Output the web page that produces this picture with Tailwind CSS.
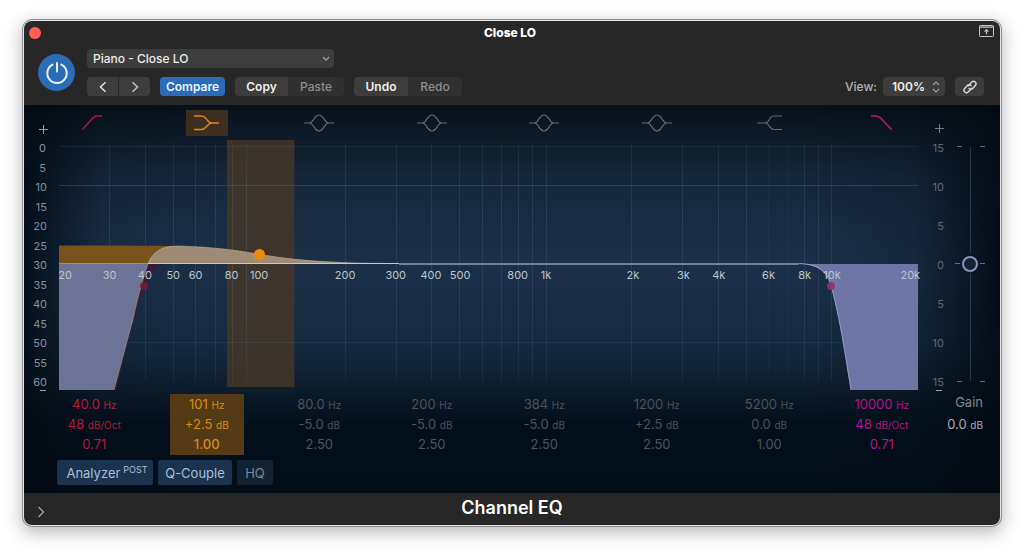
<!DOCTYPE html>
<html lang="en">
<head>
<meta charset="utf-8">
<meta name="viewport" content="width=device-width, initial-scale=1">
<title>Channel EQ</title>
<script src="https://cdn.jsdelivr.net/npm/@tailwindcss/browser@4"></script>
</head>
<body class="bg-white px-6 pt-[21px] pb-7 font-['Inter','Liberation_Sans',sans-serif]">
<div class="flex flex-col overflow-hidden rounded-lg bg-[#272727] shadow-[0_0_0_1px_#e6e4e6,0_0_0_2px_#8f8d8f,0_5px_18px_2px_rgba(0,0,0,0.3)]">

  <!-- Title bar and plug-in header -->
  <header class="pb-[9px]">
    <div class="flex h-7 items-start justify-between pr-[6px] pl-[5px]">
      <button aria-label="Close" class="mt-[6px] size-3 rounded-full bg-[#ff5f57]"></button>
      <h1 class="mt-1 text-xs leading-4 font-extrabold text-white">Close LO</h1>
      <button aria-label="Detach window" class="mt-1 text-[#c4c4c4]">
        <svg class="block" width="15" height="12" viewBox="0 0 15 12" fill="none" stroke="currentColor"><rect x=".5" y=".5" width="14" height="11" rx=".8"/><path d="M.5 2.1h14" stroke-width="1.6" opacity=".75"/><path d="M7.500 9.300V4.800M5.500 6.700l2-2 2 2" stroke-width="1.200"/></svg>
      </button>
    </div>
    <div class="flex items-center pr-4 pl-[14px]">
      <button aria-label="Power" class="grid size-[37px] place-items-center rounded-full bg-[#2a6cb8] text-[#e6eef8]">
        <svg width="24" height="24" viewBox="0 0 24 24" fill="none" stroke="currentColor" stroke-width="2" stroke-linecap="round"><path d="M12 2v8.500M7.600 3.600a9.700 9.700 0 1 0 8.800 0"/></svg>
      </button>
      <div class="ml-3 flex flex-1 flex-col gap-[9px]">
        <div class="relative w-[247px]">
          <select aria-label="Preset" class="block h-[19px] w-full appearance-none rounded bg-[#3d3d3d] pl-[6px] text-xs font-medium text-[#ededed]"><option>Piano - Close LO</option></select>
          <svg class="pointer-events-none absolute top-[7px] right-1" width="8" height="6" viewBox="0 0 8 6" fill="none" stroke="#a0a0a0" stroke-width="1.200"><path d="M1 1l3 3.200L7 1"/></svg>
        </div>
        <div class="flex h-[19px] items-stretch gap-[10px] text-xs leading-[19px] font-semibold">
          <div class="flex gap-px overflow-hidden rounded">
            <button aria-label="Previous preset" class="grid w-[31px] place-items-center bg-[#3d3d3d]"><svg width="8" height="12" viewBox="0 0 8 12" fill="none" stroke="#e2e2e2" stroke-width="1.500"><path d="M6.500 1.200L1.500 6l5 4.800"/></svg></button>
            <button aria-label="Next preset" class="grid w-[31px] place-items-center bg-[#3d3d3d]"><svg width="8" height="12" viewBox="0 0 8 12" fill="none" stroke="#c4c4c4" stroke-width="1.500"><path d="M1.500 1.200l5 4.800-5 4.800"/></svg></button>
          </div>
          <button class="w-[65px] rounded bg-[#2a6cb8] text-[#e8f1fb]">Compare</button>
          <div class="flex overflow-hidden rounded">
            <button class="w-[53px] bg-[#3d3d3d] text-[#ededed]">Copy</button>
            <button class="w-14 bg-[#303030] font-medium text-[#8e8e8e]">Paste</button>
          </div>
          <div class="flex overflow-hidden rounded">
            <button class="w-[54px] bg-[#3d3d3d] text-[#ededed]">Undo</button>
            <button class="w-[54px] bg-[#303030] font-medium text-[#8e8e8e]">Redo</button>
          </div>
          <div class="ml-auto flex">
            <label for="view" class="mr-[6px] font-medium text-[#b4b4b4]">View:</label>
            <div class="relative w-[62px]">
              <select id="view" class="block h-[19px] w-full appearance-none rounded bg-[#3d3d3d] pl-[9px] text-xs font-semibold text-[#ededed]"><option>100%</option></select>
              <svg class="pointer-events-none absolute top-1 right-[5px]" width="8" height="12" viewBox="0 0 8 12" fill="none" stroke="#9a9a9a" stroke-width="1.200"><path d="M1 4l3-3 3 3M1 8l3 3 3-3"/></svg>
            </div>
            <button aria-label="Link" class="ml-[10px] grid w-[29px] place-items-center rounded bg-[#3d3d3d]">
              <svg width="14" height="14" viewBox="0 0 14 14" fill="none" stroke="#d6d6d6" stroke-width="1.500" stroke-linecap="round"><path d="M5.300 5.800l3.300-3.600a2.500 2.500 0 0 1 3.700 3.400L9.700 8.400a2.500 2.500 0 0 1-3.600.1"/><path d="M8.700 8.200l-3.300 3.600a2.500 2.500 0 0 1-3.700-3.400L4.300 5.600a2.500 2.500 0 0 1 3.600-.1"/></svg>
            </button>
          </div>
        </div>
      </div>
    </div>
  </header>

  <main class="relative bg-[linear-gradient(90deg,rgba(2,10,18,0.85),rgba(2,10,18,0.1)_8%,transparent_20%,transparent_80%,rgba(2,10,18,0.2)_91%,rgba(2,10,18,0.9)),linear-gradient(180deg,#08111a,#0e1b28_9%,#15263a_18%,#1a2d44_32%,#1b3048_44%,#152a40_62%,#0d1c2b_73%,#03101c_82%,#020d17)]">
    <!-- Band selectors -->
    <nav aria-label="Bands" class="mr-[62px] ml-[14px] grid h-[34px] grid-cols-8 justify-items-center pt-[5px] text-[#5b6b7a]">
      <button aria-label="Low cut" class="grid h-[26px] w-[42px] place-items-center text-[#a81842]"><svg width="30" height="18" viewBox="0 0 30 18" fill="none" stroke="currentColor" stroke-width="1.300"><path d="M3.500 15.500L12 6Q15.500 2 18 2h5"/></svg></button>
      <button aria-label="Low shelf" class="grid h-[26px] w-[42px] place-items-center bg-[#3d2e20] text-[#d98a15]"><svg width="30" height="18" viewBox="0 0 30 18" fill="none" stroke="currentColor" stroke-width="1.300"><path d="M2 2h7Q12 2 14 4.500L16 7Q17.500 9 20 9h7M2 15.500h7q3 0 5-2.500l2-2Q17.500 9 20 9"/></svg></button>
      <button aria-label="Peak 1" class="grid h-[26px] w-[42px] place-items-center"><svg width="30" height="18" viewBox="0 0 30 18" fill="none" stroke="currentColor" stroke-width="1.200"><path d="M0 9h5q2 0 3.200-1.600L11.500 3q3.500-4 7 0l3.300 4.400Q23 9 25 9h5M5 9q2 0 3.200 1.600l3.300 4.400q3.500 4 7 0l3.300-4.400Q23 9 25 9"/></svg></button>
      <button aria-label="Peak 2" class="grid h-[26px] w-[42px] place-items-center"><svg width="30" height="18" viewBox="0 0 30 18" fill="none" stroke="currentColor" stroke-width="1.200"><path d="M0 9h5q2 0 3.200-1.600L11.500 3q3.500-4 7 0l3.300 4.400Q23 9 25 9h5M5 9q2 0 3.200 1.600l3.300 4.400q3.500 4 7 0l3.300-4.400Q23 9 25 9"/></svg></button>
      <button aria-label="Peak 3" class="grid h-[26px] w-[42px] place-items-center"><svg width="30" height="18" viewBox="0 0 30 18" fill="none" stroke="currentColor" stroke-width="1.200"><path d="M0 9h5q2 0 3.200-1.600L11.500 3q3.500-4 7 0l3.300 4.400Q23 9 25 9h5M5 9q2 0 3.200 1.600l3.300 4.400q3.500 4 7 0l3.300-4.400Q23 9 25 9"/></svg></button>
      <button aria-label="Peak 4" class="grid h-[26px] w-[42px] place-items-center"><svg width="30" height="18" viewBox="0 0 30 18" fill="none" stroke="currentColor" stroke-width="1.200"><path d="M0 9h5q2 0 3.200-1.600L11.500 3q3.500-4 7 0l3.300 4.400Q23 9 25 9h5M5 9q2 0 3.200 1.600l3.300 4.400q3.500 4 7 0l3.300-4.400Q23 9 25 9"/></svg></button>
      <button aria-label="High shelf" class="grid h-[26px] w-[42px] place-items-center"><svg width="30" height="18" viewBox="0 0 30 18" fill="none" stroke="currentColor" stroke-width="1.200"><path d="M28 2h-8q-2.500 0-4 2.500L14.500 7Q13 9 11 9H3M28 15.500h-8q-2.500 0-4-2.300L14.500 11Q13 9 11 9"/></svg></button>
      <button aria-label="High cut" class="grid h-[26px] w-[42px] place-items-center text-[#c2147e]"><svg width="30" height="18" viewBox="0 0 30 18" fill="none" stroke="currentColor" stroke-width="1.500"><path d="M4 2h5q2.500 0 5 2.500l10.500 11"/></svg></button>
    </nav>

    <!-- Scale step buttons sit over the ends of the two scales -->
    <button aria-label="Raise analyzer scale" class="absolute top-[19px] left-[14px] grid size-[10px] place-items-center text-[#8fa0b2]"><svg width="9" height="9" viewBox="0 0 9 9" stroke="currentColor"><path d="M0 4.500h9M4.500 0v9"/></svg></button>
    <button aria-label="Raise gain scale" class="absolute top-[18px] right-14 grid size-[10px] place-items-center text-[#6f8091]"><svg width="9" height="9" viewBox="0 0 9 9" stroke="currentColor"><path d="M0 4.500h9M4.500 0v9"/></svg></button>
    <button aria-label="Lower analyzer scale" class="absolute top-[285px] left-4 h-px w-[6px] bg-[#8fa0b2]"></button>
    <button aria-label="Lower gain scale" class="absolute top-[285px] right-[58px] h-px w-[6px] bg-[#8fa0b2]"></button>

    <div class="flex h-[252px] items-stretch text-[11px] leading-[18px]">
      <ol aria-label="Analyzer scale" class="flex w-[35px] flex-col justify-between pr-3 text-right text-[#7f90a2]">
        <li class="pr-px">0</li><li class="pr-px">5</li><li>10</li><li>15</li><li>20</li><li>25</li><li>30</li><li>35</li><li>40</li><li>45</li><li>50</li><li>55</li><li>60</li>
      </ol>

      <!-- Response graph -->
      <div class="relative flex-1">
        <svg class="block h-[251px] w-full" viewBox="0 0 859 251" preserveAspectRatio="none" fill="none" role="img" aria-label="Frequency response">
          <defs>
            <linearGradient id="fade" x1="0" y1="0" x2="0" y2="251" gradientUnits="userSpaceOnUse"><stop offset="0" stop-color="#7f9bb5" stop-opacity=".1"/><stop offset=".3" stop-color="#7f9bb5" stop-opacity=".16"/><stop offset=".7" stop-color="#7f9bb5" stop-opacity=".14"/><stop offset="1" stop-color="#7f9bb5" stop-opacity=".08"/></linearGradient>
          </defs>
          <rect x="168" y="1" width="67.500" height="247" rx="1" fill="#463728" fill-opacity=".82"/>
          <g stroke="url(#fade)">
            <path d="M50.500 6v237.010M86.500 5v237.010M114.500 5v237.010M136.500 6v237.010M156.500 6v237.010M173.500 6v237.010M187.500 5v237.010M286.500 5v237.010M337.500 6v237.010M372.500 5v237.010M400.500 5v237.010M423.500 6v237.010M442.500 6v237.010M459.500 5v237.010M473.500 5v237.010M487.500 5v237.010M572.500 6v237.010M623.500 6v237.010M659.500 5v237.010M687.500 6v237.010M745.500 6v237.010M759.500 5v237.010M772.500 6v237.010"/>
            <path d="M709.500 6v237.010M729.500 6v237.010" opacity=".35"/>
          </g>
          <path stroke="#7f9bb5" stroke-opacity=".22" d="M0 46.500h859"/>
          <path stroke="#7f9bb5" stroke-opacity=".12" d="M0 7.500h859M0 203.500h859"/>
          <path stroke="#7f9bb5" stroke-opacity=".03" d="M0 86.500h859M0 164.500h859"/>
          <path fill="#79531b" d="M0 106.500C60 106.500 105 106.500 125 107.500L89 125H0z"/>
          <path fill="#6c7396" d="M0 125H89C86 133 80 153 74 180L55 251H0z"/>
          <path fill="#48162f" d="M89 125H108C98 127 91 134 86 146C76 176 66 215 57 251H54.500L74 180C80 153 86 133 89 125z" opacity=".6"/>
          <path fill="#6f75a6" d="M740 125H859V251H792C788 227 782 185 774 154C770 136 764 126 740 125z"/>
          <path fill="#9d8b75" d="M89 125C94 112 103 107 119 107C155 108 180 111.500 201 115.500C232 120.500 265 124 340 125z"/>
          <path stroke="#d3c7b8" stroke-opacity=".45" d="M55 251L74 180C80 153 86 133 89 125C94 112 103 107 119 107C155 108 180 111.500 201 115.500C232 120.500 265 124.500 340 124.500"/>
          <path stroke="#b88a4c" d="M0 124.500H89" /><path stroke="#d8c7ae" d="M89 124.500H340"/>
          <path stroke="#8e9fb2" stroke-width="1.500" d="M340 125H740"/><path stroke="#a9b0cc" stroke-opacity=".8" d="M740 124.500C764 125 770 136 774 154C782 185 788 227 792 251"/>
        </svg>
        <span class="absolute top-[143px] left-[10%] -ml-[5px] size-2 rounded-full bg-[#7d1a30]/80"></span>
        <span class="absolute top-[110px] left-[23.4%] -ml-[6px] size-[11px] rounded-full bg-[#ec8c05]"></span>
        <span class="absolute top-[143px] left-[90%] -ml-[5px] size-2 rounded-full bg-[#92306f]/90"></span>
        <div class="text-[#bcc5d0] *:absolute *:top-[127px] *:-translate-x-1/2">
          <span style="left:0.7%">20</span><span style="left:5.9%">30</span><span style="left:10%">40</span><span style="left:13.3%">50</span><span style="left:15.9%">60</span><span style="left:20.1%">80</span><span style="left:23.3%">100</span><span style="left:33.3%">200</span><span style="left:39.2%">300</span><span style="left:43.3%">400</span><span style="left:46.7%">500</span><span style="left:53.4%">800</span><span style="left:56.7%">1k</span><span style="left:66.8%">2k</span><span style="left:72.7%">3k</span><span style="left:76.8%">4k</span><span style="left:82.6%">6k</span><span style="left:86.8%">8k</span><span style="left:90%">10k</span><span style="left:99.1%">20k</span>
        </div>
      </div>

      <ol aria-label="Gain scale" class="flex w-[26px] flex-col justify-between text-right text-[#5b6b7b]">
        <li>15</li><li>10</li><li>5</li><li>0</li><li>5</li><li>10</li><li>15</li>
      </ol>

      <!-- Output gain slider -->
      <div class="relative flex w-14 justify-center pr-1">
        <svg class="absolute top-0 left-[11px]" width="30" height="251" viewBox="0 0 30 251" stroke="#7f90a2" stroke-opacity=".7"><path d="M15.500 8v106M15.500 134v108" stroke-opacity=".3"/><path d="M2 7.500h5M25 7.500h5M2 242.500h5M25 242.500h5M0 124.500h5M25 124.500h5"/></svg>
        <input type="range" min="-15" max="15" value="0" step="0.5" aria-label="Gain" class="relative h-[250px] w-4 appearance-none bg-transparent [writing-mode:vertical-lr] [direction:rtl] [&::-webkit-slider-thumb]:size-4 [&::-webkit-slider-thumb]:appearance-none [&::-webkit-slider-thumb]:rounded-full [&::-webkit-slider-thumb]:border-2 [&::-webkit-slider-thumb]:border-[#8595bb] [&::-webkit-slider-thumb]:bg-[#142334]">
      </div>
    </div>

    <!-- Band values -->
    <div class="mt-[3px] flex pl-[14px] text-[13px] leading-5 text-[#47535f] [&_p]:h-5 [&_small]:text-[10px] [&_small]:leading-none">
      <div class="grid flex-1 grid-cols-8 justify-items-center text-center *:h-[61px] *:w-[74px] *:whitespace-nowrap">
        <div class="text-[#b51a38]"><p>40.0 <small>Hz</small></p><p>48 <small>dB/Oct</small></p><p>0.71</p></div>
        <div class="bg-[#543a15] text-[#d98a12]"><p>101 <small>Hz</small></p><p>+2.5 <small>dB</small></p><p class="font-medium">1.00</p></div>
        <div><p>80.0 <small>Hz</small></p><p>-5.0 <small>dB</small></p><p>2.50</p></div>
        <div><p>200 <small>Hz</small></p><p>-5.0 <small>dB</small></p><p>2.50</p></div>
        <div><p>384 <small>Hz</small></p><p>-5.0 <small>dB</small></p><p>2.50</p></div>
        <div><p>1200 <small>Hz</small></p><p>+2.5 <small>dB</small></p><p>2.50</p></div>
        <div><p>5200 <small>Hz</small></p><p>0.0 <small>dB</small></p><p>1.00</p></div>
        <div class="text-[#b3138c]"><p>10000 <small>Hz</small></p><p>48 <small>dB/Oct</small></p><p>0.71</p></div>
      </div>
      <div class="w-[62px] pr-[17px] text-right whitespace-nowrap"><p class="leading-4 text-[#7b8894]">Gain</p><p class="text-[#a3adb8]">0.0 <small>dB</small></p></div>
    </div>

    <div class="mt-[5px] flex gap-[5px] pb-2 pl-[33px] text-[13px] leading-[26px] text-[#a9bfdb]">
      <button class="flex h-[25px] w-24 justify-center gap-[3px] rounded-xs bg-[#1c3350] pl-1">Analyzer <span class="text-[9px] leading-5">POST</span></button>
      <button class="h-[25px] w-[74px] rounded-xs bg-[#1c3350]">Q-Couple</button>
      <button class="h-[25px] w-9 rounded-xs bg-[#132232] text-[#7688a0]">HQ</button>
    </div>
  </main>

  <footer class="relative flex h-8 items-center justify-center">
    <button aria-label="Show more" class="absolute top-[13px] left-[13px]"><svg class="block" width="8" height="12" viewBox="0 0 8 12" fill="none" stroke="#a5a5a5" stroke-width="1.300"><path d="M1.500 1l5 5-5 5"/></svg></button>
    <h2 class="-mt-[2px] text-lg font-semibold text-white">Channel EQ</h2>
  </footer>
</div>
</body>
</html>
